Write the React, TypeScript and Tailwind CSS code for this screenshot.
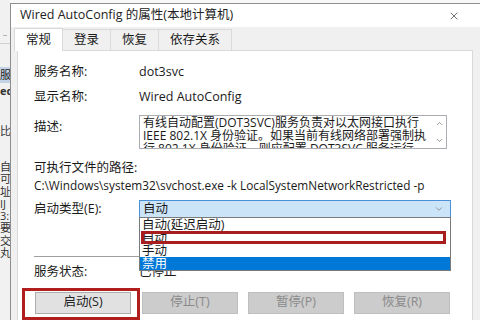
import { X, ChevronDown, ChevronUp } from "lucide-react";

const tabs = ["常规", "登录", "恢复", "依存关系"];
const sideGlyphs = ["自", "可", "址", "IJ", "3:", "要", "交", "丸"];
const options = ["自动(延迟启动)", "自动", "手动", "禁用"];
const buttons = ["停止(T)", "暂停(P)", "恢复(R)"];

export default function App() {
  return (
    <div className="w-[480px] h-[320px] overflow-hidden flex bg-[#f8f8f8] text-[12.5px] text-[#1a1a1a] font-['Open_Sans','Noto_Sans_CJK_SC',sans-serif]">
      {/* edge of the window behind */}
      <div className="w-[10px] shrink-0 overflow-hidden bg-[#f1f1f1] flex flex-col text-[11px]">
        <div className="mt-[35px] ml-[3px] w-[4px] h-px bg-[#b5b5b5]" />
        <div className="mt-[7px] w-[10px] h-px bg-[#cfcfcf]" />
        <div className="mt-[23px] h-[16px] bg-[#c3d3e6] leading-[16px] whitespace-nowrap text-[#222]">服</div>
        <div className="mt-[1px] leading-[14px] whitespace-nowrap font-bold text-[#333]">ed</div>
        <div className="mt-[25px] leading-[16px] whitespace-nowrap text-[#333]">比</div>
        <div className="mt-[22px] flex flex-col leading-[12.3px] text-[#333]">
          {sideGlyphs.map((g, i) => (
            <span key={i} className="whitespace-nowrap">{g}</span>
          ))}
        </div>
      </div>

      {/* dialog */}
      <div className="flex-1 min-w-0 mt-[3px] border-l border-t border-[#8e8e8e] bg-[#f0f0f0] flex flex-col">
        {/* title bar */}
        <div className="h-[23px] shrink-0 bg-white flex items-center justify-between pl-[9px] pr-[20px]">
          <span className="whitespace-nowrap text-[#222]">Wired AutoConfig 的属性(本地计算机)</span>
          <X className="w-[12px] h-[12px] text-[#333]" strokeWidth={1.4} />
        </div>

        {/* tabs */}
        <div className="h-[23px] shrink-0 flex items-end pl-[3px]">
          {tabs.map((t, i) => (
            <div
              key={t}
              className={
                i === 0
                  ? "h-[23px] -mb-px relative z-10 px-[11px] bg-white border border-b-0 border-[#d9d9d9] flex items-center"
                  : "h-[21px] px-[11px] border border-l-0 border-b-0 border-[#dadada] bg-[#f0f0f0] flex items-center"
              }
            >
              {t}
            </div>
          ))}
        </div>

        {/* general page */}
        <div className="ml-[6px] w-[456px] flex-1 bg-white border border-[#d9d9d9] flex flex-col pl-[16px]">
          <div className="mt-[13px] flex h-[16px] items-center">
            <span className="w-[105px]">服务名称:</span>
            <span>dot3svc</span>
          </div>
          <div className="mt-[9px] flex h-[16px] items-center">
            <span className="w-[105px]">显示名称:</span>
            <span>Wired AutoConfig</span>
          </div>
          <div className="mt-[10px] flex">
            <span className="w-[105px] mt-[4px] leading-[16px]">描述:</span>
            <div className="w-[308px] h-[34px] border border-[#abadb3] overflow-hidden flex">
              <div className="flex-1 pl-[3px] text-[12px] leading-[13px] whitespace-nowrap overflow-hidden">
                <div>有线自动配置(DOT3SVC)服务负责对以太网接口执行</div>
                <div>IEEE 802.1X 身份验证。如果当前有线网络部署强制执</div>
                <div>行 802.1X 身份验证，则应配置 DOT3SVC 服务运行</div>
              </div>
              <div className="w-[14px] flex flex-col items-center justify-between py-[3px] text-[#555]">
                <ChevronUp className="w-[9px] h-[9px]" strokeWidth={1.6} />
                <ChevronDown className="w-[9px] h-[9px]" strokeWidth={1.6} />
              </div>
            </div>
          </div>
          <div className="mt-[11px] h-[16px] leading-[16px]">可执行文件的路径:</div>
          <div className="mt-[1px] h-[16px] leading-[16px] whitespace-nowrap text-[11.8px]">
            C:\Windows\system32\svchost.exe -k LocalSystemNetworkRestricted -p
          </div>
          <div className="mt-[7px] flex items-center">
            <span className="w-[105px]">启动类型(E):</span>
            <div className="relative w-[312px] h-[18px] bg-[#cce4f7] border border-[#4a90d9] flex items-center justify-between pl-[3px] pr-[6px]">
              <span className="leading-[16px]">自动</span>
              <ChevronDown className="w-[10px] h-[10px] text-[#555]" strokeWidth={1.3} />
              {/* open list */}
              <div className="absolute left-[-1px] right-[-1px] top-full z-20 bg-white border border-[#7a7a7a] flex flex-col">
                {options.map((o, i) => (
                  <div
                    key={o}
                    className={
                      i === 3
                        ? "h-[13px] leading-[13px] pl-[2px] bg-[#0078d7] text-white"
                        : "h-[13px] leading-[13px] pl-[2px]"
                    }
                  >
                    {o}
                  </div>
                ))}
                <div className="absolute left-[1px] right-[4px] top-[13px] h-[13px] border-[3px] border-[#a81d1d]" />
              </div>
            </div>
          </div>
          <div className="mt-[37px] w-[417px] h-px bg-[#a0a0a0]" />
          <div className="mt-[8px] flex h-[16px] items-center">
            <span className="w-[105px]">服务状态:</span>
            <span>已停止</span>
          </div>
          <div className="mt-[7px] flex items-start">
            <div className="-ml-[12px] w-[118px] h-[32px] border-[3px] border-[#b01e1e] pl-[10px] pt-[1px]">
              <div className="w-[96px] h-[22px] bg-[#e1e1e1] border border-[#adadad] flex items-center justify-center text-[#222]">
                启动(S)
              </div>
            </div>
            <div className="mt-[4px] ml-[2px] flex gap-[10px]">
              {buttons.map((b) => (
                <div
                  key={b}
                  className="w-[96px] h-[22px] bg-[#cccccc] border border-[#bfbfbf] flex items-center justify-center text-[#8a8a8a]"
                >
                  {b}
                </div>
              ))}
            </div>
          </div>
        </div>
      </div>
    </div>
  );
}
